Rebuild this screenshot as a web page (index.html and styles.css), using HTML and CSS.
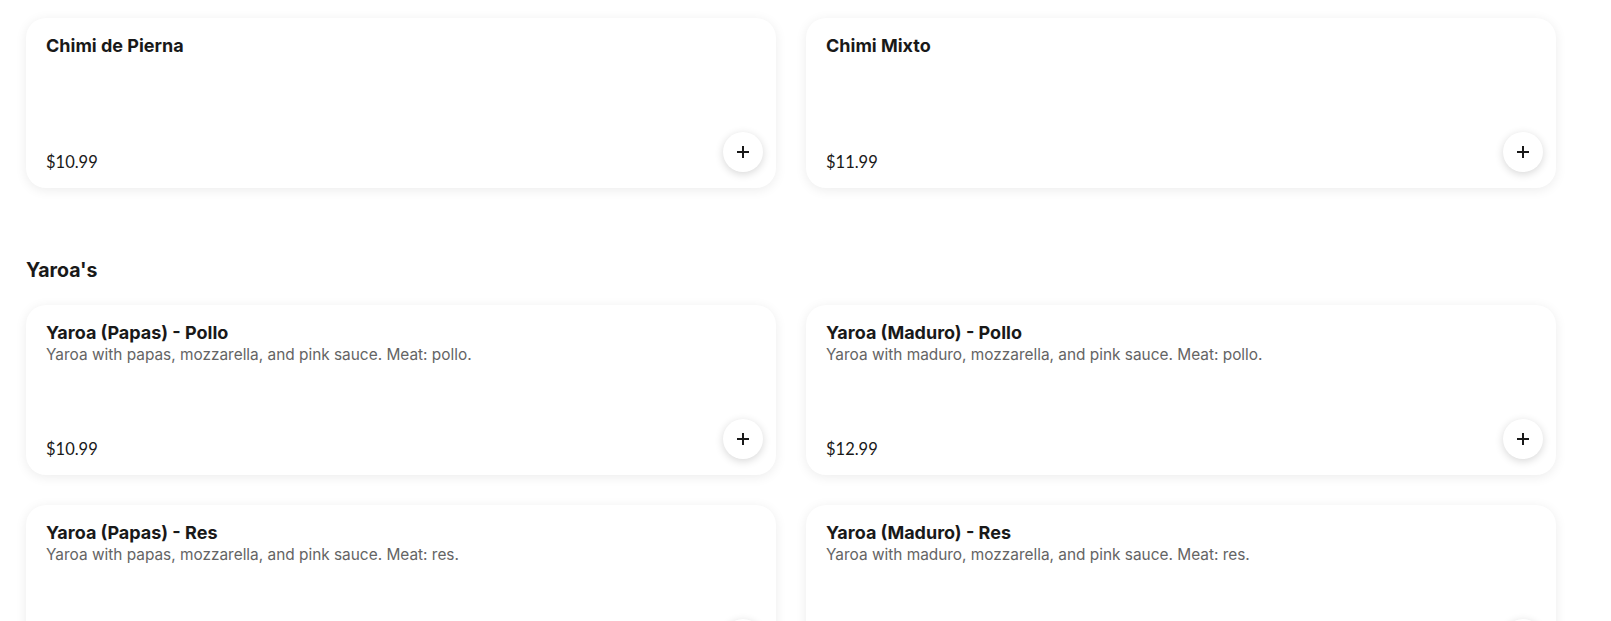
FILE: index.html
```html
<!DOCTYPE html>
<html lang="en">
<head>
<meta charset="utf-8">
<title>Menu</title>
<link rel="stylesheet" href="styles.css">
</head>
<body>
<main class="menu">
  <section class="section">
    <div class="grid">
      <article class="card">
        <div class="card-body">
          <h3 class="item-name">Chimi de Pierna</h3>
        </div>
        <div class="card-foot">
          <span class="price">$10.99</span>
          <button class="add" aria-label="Add"><svg viewBox="0 0 14 14" width="14" height="14"><path d="M7 1v12M1 7h12" stroke="#191919" stroke-width="2" fill="none"/></svg></button>
        </div>
      </article>
      <article class="card">
        <div class="card-body">
          <h3 class="item-name">Chimi Mixto</h3>
        </div>
        <div class="card-foot">
          <span class="price">$11.99</span>
          <button class="add" aria-label="Add"><svg viewBox="0 0 14 14" width="14" height="14"><path d="M7 1v12M1 7h12" stroke="#191919" stroke-width="2" fill="none"/></svg></button>
        </div>
      </article>
    </div>
  </section>

  <section class="section">
    <h2 class="section-title">Yaroa's</h2>
    <div class="grid">
      <article class="card">
        <div class="card-body">
          <h3 class="item-name">Yaroa (Papas) - Pollo</h3>
          <p class="item-desc">Yaroa with papas, mozzarella, and pink sauce. Meat: pollo.</p>
        </div>
        <div class="card-foot">
          <span class="price">$10.99</span>
          <button class="add" aria-label="Add"><svg viewBox="0 0 14 14" width="14" height="14"><path d="M7 1v12M1 7h12" stroke="#191919" stroke-width="2" fill="none"/></svg></button>
        </div>
      </article>
      <article class="card">
        <div class="card-body">
          <h3 class="item-name">Yaroa (Maduro) - Pollo</h3>
          <p class="item-desc">Yaroa with maduro, mozzarella, and pink sauce. Meat: pollo.</p>
        </div>
        <div class="card-foot">
          <span class="price">$12.99</span>
          <button class="add" aria-label="Add"><svg viewBox="0 0 14 14" width="14" height="14"><path d="M7 1v12M1 7h12" stroke="#191919" stroke-width="2" fill="none"/></svg></button>
        </div>
      </article>
      <article class="card">
        <div class="card-body">
          <h3 class="item-name">Yaroa (Papas) - Res</h3>
          <p class="item-desc">Yaroa with papas, mozzarella, and pink sauce. Meat: res.</p>
        </div>
        <div class="card-foot">
          <span class="price">$11.99</span>
          <button class="add" aria-label="Add"><svg viewBox="0 0 14 14" width="14" height="14"><path d="M7 1v12M1 7h12" stroke="#191919" stroke-width="2" fill="none"/></svg></button>
        </div>
      </article>
      <article class="card">
        <div class="card-body">
          <h3 class="item-name">Yaroa (Maduro) - Res</h3>
          <p class="item-desc">Yaroa with maduro, mozzarella, and pink sauce. Meat: res.</p>
        </div>
        <div class="card-foot">
          <span class="price">$13.99</span>
          <button class="add" aria-label="Add"><svg viewBox="0 0 14 14" width="14" height="14"><path d="M7 1v12M1 7h12" stroke="#191919" stroke-width="2" fill="none"/></svg></button>
        </div>
      </article>
    </div>
  </section>
</main>
</body>
</html>
```
FILE: styles.css
```css
html, body {
  margin: 0;
  padding: 0;
  background: #ffffff;
}
body {
  font-family: Inter, "Liberation Sans", sans-serif;
  color: #191919;
  overflow: hidden;
}
.menu {
  padding: 18px 0 0 26px;
  width: 1530px;
}
.section + .section {
  margin-top: 68px;
}
.section-title {
  margin: 0 0 21px 0;
  font-size: 19.5px;
  line-height: 28px;
  font-weight: 700;
  color: #191919;
}
.grid {
  display: grid;
  grid-template-columns: 750px 750px;
  column-gap: 30px;
  row-gap: 30px;
}
.card {
  height: 170px;
  box-sizing: border-box;
  background: #ffffff;
  border-radius: 20px;
  box-shadow: 0 2px 12px rgba(0, 0, 0, 0.08);
  padding: 16px 13px 14px 20px;
  display: flex;
  flex-direction: column;
  justify-content: space-between;
}
.item-name {
  margin: 0;
  font-size: 18px;
  line-height: 24px;
  font-weight: 700;
  color: #191919;
}
.item-desc {
  margin: 0;
  font-size: 15.4px;
  line-height: 20px;
  color: #646464;
}
.card-foot {
  display: flex;
  justify-content: space-between;
  align-items: flex-end;
}
.price {
  font-family: Lato, "Liberation Sans", sans-serif;
  font-size: 16.5px;
  line-height: 20px;
  color: #191919;
  margin-bottom: 2px;
}
.add {
  width: 40px;
  height: 40px;
  margin-bottom: 2px;
  border-radius: 50%;
  border: none;
  background: #ffffff;
  box-shadow: 0 2px 8px rgba(0, 0, 0, 0.16);
  display: flex;
  align-items: center;
  justify-content: center;
  padding: 0;
  cursor: pointer;
}
.add svg {
  display: block;
}
```
